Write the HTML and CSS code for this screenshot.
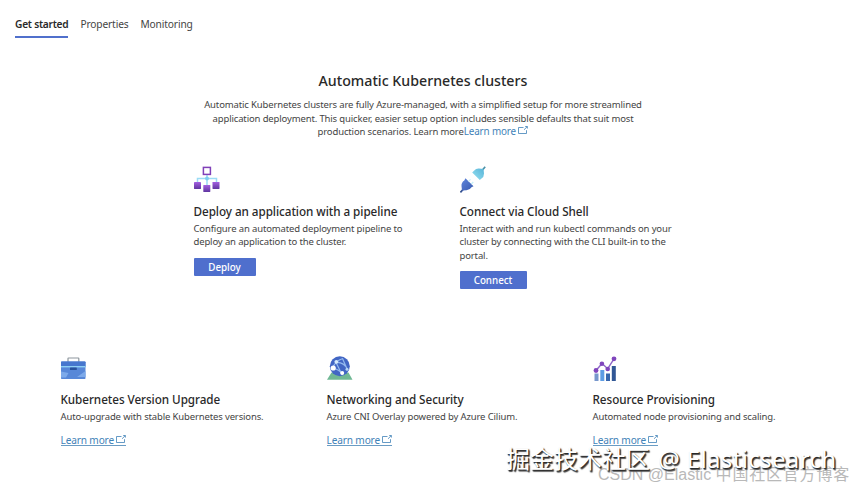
FILE: index.html
```html
<!DOCTYPE html>
<html lang="en">
  <head>
    <meta charset="utf-8">
    <title>Automatic Kubernetes clusters</title>
    <link rel="stylesheet" href="styles.css">
  </head>
  <body>
    <svg class="defs" width="0" height="0">
      <symbol id="external" viewBox="0 0 10 9">
        <path d="M5.5 1.5H.5v6h8V4.2M6 3.8 9.3.6M7.2.5h2.2v2.1" fill="none" stroke="currentColor" stroke-width=".8"/>
      </symbol>
    </svg>

    <nav class="tabs">
      <a class="tab active">Get started</a>
      <a class="tab">Properties</a>
      <a class="tab">Monitoring</a>
    </nav>

    <header class="intro">
      <h1>Automatic Kubernetes clusters</h1>
      <p>Automatic Kubernetes clusters are fully Azure-managed, with a simplified setup for more streamlined<br>
        application deployment. This quicker, easier setup option includes sensible defaults that suit most<br>
        production scenarios. Learn more<a class="link">Learn more <svg class="ext"><use href="#external"/></svg></a></p>
    </header>

    <section class="cards top">
      <div class="card">
        <svg class="icon" viewBox="0 0 26 28">
          <defs>
            <linearGradient id="purple" x1="0" y1="0" x2="0" y2="1">
              <stop offset="0" stop-color="#a45fe0"/>
              <stop offset="1" stop-color="#5f35a0"/>
            </linearGradient>
          </defs>
          <path d="M13 9v11M3.500 17v-4.500h19V17" fill="none" stroke="#9bdcf5" stroke-width="1.500"/>
          <circle cx="13" cy="12.500" r="1.900" fill="#7fcdf0"/>
          <rect x="9.400" y="1.400" width="7" height="7" fill="#fff" stroke="#8040b8" stroke-width="1.500"/>
          <rect x="0" y="16" width="7" height="7" rx=".4" fill="url(#purple)"/>
          <rect x="9.300" y="19" width="7" height="7" rx=".4" fill="url(#purple)"/>
          <rect x="18.500" y="16" width="7" height="7" rx=".4" fill="url(#purple)"/>
        </svg>
        <h2>Deploy an application with a pipeline</h2>
        <p>Configure an automated deployment pipeline to<br>deploy an application to the cluster.</p>
        <button class="button deploy">Deploy</button>
      </div>
      <div class="card">
        <svg class="icon" viewBox="0 0 26 28">
          <defs>
            <linearGradient id="plug" x1="0" y1="0" x2="1" y2="1">
              <stop offset="0" stop-color="#5f86dc"/>
              <stop offset="1" stop-color="#3a5bb0"/>
            </linearGradient>
            <linearGradient id="socket" x1="1" y1="0" x2="0" y2="1">
              <stop offset="0" stop-color="#58b4d8"/>
              <stop offset="1" stop-color="#98e2f2"/>
            </linearGradient>
          </defs>
          <path d="M.4 26.400 4 22.500" stroke="#34508f" stroke-width="1.700"/>
          <path d="M5.400 12.200 13.500 20.200 11.500 21.300Q10 24 6.500 24.300L2 24.500 1.500 20Q1.200 16.500 4.300 14.500z" fill="url(#plug)"/>
          <path d="m8.500 15.300 2-2M11.300 18l2-2" stroke="#c5eef8" stroke-width="1.200"/>
          <path d="m22 4.500 3.200-3.700" stroke="#4a91a8" stroke-width="1.700"/>
          <path d="M12.200 6.500 19.800 14 21.500 12.500Q24 11 24 7.500L23.500 3 19 2.500Q16 2.300 14 4.700z" fill="url(#socket)"/>
        </svg>
        <h2>Connect via Cloud Shell</h2>
        <p>Interact with and run kubectl commands on your<br>cluster by connecting with the CLI built-in to the<br>portal.</p>
        <button class="button connect">Connect</button>
      </div>
    </section>

    <section class="cards bottom">
      <div class="card">
        <svg class="icon" viewBox="0 0 26 28">
          <path d="M7 7V3.500Q7 3 7.500 3h9.800q.5 0 .5.500V7" fill="none" stroke="#8d969d" stroke-width="1.200"/>
          <rect y="6.500" width="24.500" height="17.500" rx=".7" fill="#5888d8"/>
          <path d="M0 7.200q0-.7.700-.7h23.100q.7 0 .7.700V12H0z" fill="#4777ce"/>
          <path d="M0 11h24.500v1.400H0z" fill="#8fd0f4"/>
          <path d="M0 16.500 7.500 18 5 22.500H0zM16 22l8.500-6v6z" fill="#7daaea"/>
          <rect x="9" y="12.500" width="6.800" height="2.600" rx=".4" fill="#28529b"/>
        </svg>
        <h2>Kubernetes Version Upgrade</h2>
        <p>Auto-upgrade with stable Kubernetes versions.</p>
        <a class="link more">Learn more <svg class="ext"><use href="#external"/></svg></a>
      </div>
      <div class="card">
        <svg class="icon" viewBox="0 0 26 28">
          <path d="M4.500 17.500h17l4 7.300H0z" fill="#70b894"/>
          <circle cx="12.800" cy="11.300" r="10" fill="#4266c4"/>
          <path d="M5.500 13.500Q8 6 16 3.500M5.500 13.500q7 .5 9.500 6M9 7.500q8-.5 11.500 7M9 7.500 15 19.500M15.500 3.500 20.500 15" fill="none" stroke="#94b9ee" stroke-width="1.200"/>
          <circle cx="6.200" cy="13" r="2.600" fill="#fff"/>
          <circle cx="9.300" cy="6.800" r="1.900" fill="#d7ebfb"/>
          <circle cx="15.200" cy="18" r="2" fill="#fff"/>
          <circle cx="20" cy="14.300" r="1.500" fill="#b7d5f5"/>
        </svg>
        <h2>Networking and Security</h2>
        <p>Azure CNI Overlay powered by Azure Cilium.</p>
        <a class="link more">Learn more <svg class="ext"><use href="#external"/></svg></a>
      </div>
      <div class="card">
        <svg class="icon" viewBox="0 0 26 28">
          <path d="M1.500 18.500h4V26h-4z" fill="#7797cc"/>
          <path d="M7.300 15h4v11h-4z" fill="#5d9ce4"/>
          <path d="M13 18.500h4V26h-4z" fill="#3766ae"/>
          <path d="M18.800 11h4v15h-4z" fill="#315795"/>
          <path d="m3 15.500 6-7 5.700 5.200L21 3.800" fill="none" stroke="#8e66c8" stroke-width="1.400"/>
          <g fill="#8046bd">
            <circle cx="3" cy="15.500" r="2.400"/>
            <circle cx="8.900" cy="8.700" r="2.300"/>
            <circle cx="14.700" cy="14" r="2.300"/>
            <circle cx="21" cy="3.800" r="2.400"/>
          </g>
        </svg>
        <h2>Resource Provisioning</h2>
        <p>Automated node provisioning and scaling.</p>
        <a class="link more">Learn more <svg class="ext"><use href="#external"/></svg></a>
      </div>
    </section>

    <div class="mark csdn">CSDN @Elastic <span class="zh">中国社区官方博客</span></div>
    <div class="mark juejin">掘金技术社区 <span class="latin">@ Elasticsearch</span></div>
  </body>
</html>
```
FILE: styles.css
```css
* {
  box-sizing: border-box;
}

body {
  position: relative;
  margin: 0;
  height: 489px;
  overflow: hidden;
  background: #fff;
  color: #444;
  font-family: "Noto Sans", "Open Sans", sans-serif;
  font-size: 9.5px;
  line-height: 13.5px;
  letter-spacing: -.14px;
  white-space: nowrap;
}

h1, h2, p {
  margin: 0;
}

.defs {
  display: block;
}

/* tabs */
.tabs {
  display: flex;
  gap: 12px;
  padding: 17px 0 0 15px;
  font-size: 10.2px;
}

.tab {
  height: 21px;
  line-height: 15px;
}

.active {
  color: #292929;
  font-weight: 600;
  border-bottom: 2px solid #5070cc;
  letter-spacing: -.25px;
}

/* intro */
.intro {
  padding: 34px 8px 0 0;
  text-align: center;
}

.intro h1 {
  margin-bottom: 8px;
  color: #292929;
  font-size: 14.2px;
  font-weight: 500;
  line-height: 18px;
  letter-spacing: 0;
}

.link {
  color: #3f82b8;
}

.intro .link {
  font-size: 9.9px;
}

.ext {
  width: 10px;
  height: 9px;
}

/* cards */
.cards {
  display: flex;
}

.top {
  height: 216px;
  padding: 27px 0 0 193.5px;
}

.bottom {
  padding-left: 60.5px;
}

.card {
  flex: none;
  width: 266px;
}

.icon {
  display: block;
  width: 26px;
  height: 28px;
}

.card h2 {
  margin: 9px 0 2px;
  color: #292929;
  font-size: 11.7px;
  font-weight: 500;
  line-height: 17px;
  letter-spacing: -.05px;
}

.bottom h2 {
  margin-top: 8px;
}

.button {
  display: block;
  height: 18px;
  margin-top: 9px;
  padding: 0;
  border: 0;
  border-radius: 1px;
  background: #4f6fcd;
  color: #fff;
  font: 500 9.8px/19px "Noto Sans", sans-serif;
}

.deploy {
  width: 62px;
}

.connect {
  width: 67px;
}

.more {
  display: inline-block;
  height: 13px;
  margin-top: 10px;
  line-height: 14px;
  font-size: 10.1px;
  border-bottom: 1px solid #6a9cc4;
}

/* watermarks */
.mark {
  position: absolute;
  line-height: 30px;
  letter-spacing: 0;
}

.juejin {
  left: 506px;
  top: 444px;
  color: #fff;
  font-family: "Noto Sans", "Noto Sans CJK SC", sans-serif;
  font-size: 24px;
  text-shadow: 1px 1px 1px #222, 1.5px 1.5px 1px #555;
}

.latin {
  margin-left: 2px;
  letter-spacing: .35px;
}

.csdn {
  left: 598px;
  top: 460px;
  color: #b9b9b9;
  font-family: "Liberation Sans", "Noto Sans CJK SC", sans-serif;
  font-size: 16px;
}

.zh {
  letter-spacing: .8px;
}
```
